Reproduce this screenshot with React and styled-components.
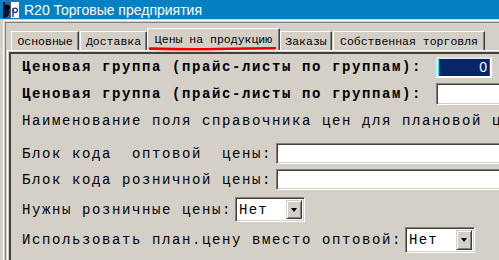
import React from 'react';
import styled, { createGlobalStyle } from 'styled-components';

const Global = createGlobalStyle`
  html, body { margin: 0; padding: 0; background: #d4d0c8; overflow: hidden; }
  #root { width: 499px; height: 260px; }
`;

const Window = styled.div`
  width: 499px;
  height: 260px;
  overflow: hidden;
  background: #d4d0c8;
  display: flex;
  flex-direction: column;
`;

const TitleBar = styled.div`
  height: 19px;
  flex-shrink: 0;
  background: #0481c3;
  display: flex;
  align-items: center;
  gap: 5px;
  padding-left: 3px;
  font-family: "Liberation Sans", Arial, sans-serif;
  font-size: 14px;
  color: #fff;
  white-space: nowrap;
`;

const Client = styled.div`
  flex: 1;
  display: flex;
  padding: 1px 0 0 3px;
  min-height: 0;
`;

const FrameOuter = styled.div`
  flex: 1;
  display: flex;
  border-top: 1px solid #fff;
  border-left: 1px solid #fff;
  padding: 1px 0 0 1px;
`;

const FrameInner = styled.div`
  flex: 1;
  display: flex;
  flex-direction: column;
  border-top: 1px solid #808080;
  border-left: 1px solid #808080;
  padding: 5px 0 0 1px;
`;

const TabStrip = styled.div`
  height: 22px;
  flex-shrink: 0;
  display: flex;
  align-items: flex-end;
  padding-left: 4px;
`;

const Tab = styled.div`
  position: relative;
  box-sizing: border-box;
  width: ${p => p.$w}px;
  height: ${p => (p.$active ? 22 : 19)}px;
  margin-left: ${p => p.$ml || 0}px;
  display: flex;
  align-items: center;
  justify-content: center;
  border-top: 1px solid #fff;
  border-left: 1px solid #fff;
  border-right: 1px solid #404040;
  box-shadow: inset -1px 0 #808080;
  font-family: "Liberation Mono", "Courier New", monospace;
  font-size: 11.5px;
  color: #000;
  white-space: nowrap;
  padding-top: ${p => (p.$active ? 0 : 1)}px;
`;

const RedMark = styled.svg`
  position: absolute;
  left: 0;
  top: 17px;
`;

const Panel = styled.div`
  flex: 1;
  display: flex;
  border-top: 1px solid #fff;
  border-left: 1px solid #fff;
  padding: 1px 0 0 1px;
`;

const PanelInner = styled.div`
  flex: 1;
  display: flex;
  flex-direction: column;
  border-top: 2px solid #404040;
  border-left: 2px solid #404040;
  padding: 2px 0 0 11px;
`;

const Row = styled.div`
  display: flex;
  align-items: center;
  height: ${p => p.$h}px;
  margin-top: ${p => p.$mt || 0}px;
  flex-shrink: 0;
`;

const Label = styled.span`
  font-family: "Liberation Mono", "Courier New", monospace;
  font-size: 14px;
  letter-spacing: 1.6px;
  font-weight: ${p => (p.$bold ? 700 : 400)};
  color: #000;
  white-space: pre;
`;

const Edit = styled.div`
  box-sizing: border-box;
  flex-shrink: 0;
  width: ${p => p.$w}px;
  height: ${p => p.$h}px;
  margin-left: ${p => p.$ml}px;
  background: #fff;
  border: 1px solid;
  border-color: #808080 #fff #fff #808080;
  box-shadow: inset 1px 1px #404040, inset -1px -1px #d4d0c8;
`;

const FocusEdit = styled.div`
  box-sizing: border-box;
  flex-shrink: 0;
  width: ${p => p.$w}px;
  height: ${p => p.$h}px;
  margin-left: ${p => p.$ml}px;
  border: 2px solid;
  border-color: #e4e4e4 #fff #fff #e4e4e4;
  background: #0a246a;
  box-shadow: inset 1px 0 #00ffff, inset -1px 0 #ff0000;
  display: flex;
  align-items: center;
  justify-content: flex-end;
  padding-right: 3px;
  font-family: "Liberation Sans", Arial, sans-serif;
  font-size: 14px;
  color: #fff;
`;

const Combo = styled.div`
  box-sizing: border-box;
  flex-shrink: 0;
  width: ${p => p.$w}px;
  height: ${p => p.$h}px;
  margin-left: ${p => p.$ml}px;
  background: #fff;
  border: 1px solid;
  border-color: #808080 #fff #fff #808080;
  box-shadow: inset 1px 1px #404040, inset -1px -1px #d4d0c8;
  display: flex;
  padding: 2px;
`;

const ComboText = styled.span`
  flex: 1;
  display: flex;
  align-items: center;
  padding-left: 1px;
  font-family: "Liberation Mono", "Courier New", monospace;
  font-size: 14px;
  letter-spacing: 1.2px;
  color: #000;
`;

const DropButton = styled.div`
  box-sizing: border-box;
  width: 16px;
  height: ${p => p.$h}px;
  background: #d4d0c8;
  border: 1px solid;
  border-color: #d4d0c8 #404040 #404040 #d4d0c8;
  box-shadow: inset 1px 1px #fff, inset -1px -1px #808080;
  display: flex;
  align-items: center;
  justify-content: center;
`;

const Arrow = styled.div`
  width: 0;
  height: 0;
  border-left: 3.5px solid transparent;
  border-right: 3.5px solid transparent;
  border-top: 4px solid #000;
`;

const Logo = () => (
  <svg width="16" height="16" viewBox="0 0 16 16">
    <rect x="0" y="0" width="16" height="16" fill="#fff" />
    <path d="M0 0 H8 V16 H0 Z" fill="#0a1430" />
    <path d="M2 3 Q5 1 7 4 Q8 6 6 8 L7 10 Q5 11 6 13 L3 16 H8 V0 H2 Z" fill="#4a5a7a" />
    <circle cx="4" cy="6" r="2.2" fill="#000" />
    <path d="M10 6 V15" stroke="#1a3a9a" strokeWidth="1.4" />
    <circle cx="12.2" cy="8.3" r="2.2" fill="none" stroke="#1a3a9a" strokeWidth="1.3" />
  </svg>
);

const Select = ({ w, h, ml, value }) => (
  <Combo $w={w} $h={h} $ml={ml}>
    <ComboText>{value}</ComboText>
    <DropButton $h={h - 6}><Arrow /></DropButton>
  </Combo>
);

export default function App() {
  return (
    <Window>
      <Global />
      <TitleBar>
        <Logo />
        <span>R20 Торговые предприятия</span>
      </TitleBar>
      <Client>
        <FrameOuter>
          <FrameInner>
            <TabStrip>
              <Tab $w={68}>Основные</Tab>
              <Tab $w={67} $ml={1}>Доставка</Tab>
              <Tab $w={133} $active>
                Цены на продукцию
                <RedMark width="130" height="5" viewBox="0 0 130 5">
                  <path d="M2 2.6 Q40 3.6 70 3 T127 2.2" stroke="#f00000" strokeWidth="2.6" fill="none" strokeLinecap="round" />
                </RedMark>
              </Tab>
              <Tab $w={52}>Заказы</Tab>
              <Tab $w={152} $ml={1}>Собственная торговля</Tab>
            </TabStrip>
            <Panel>
              <PanelInner>
                <Row $h={22}>
                  <Label $bold>Ценовая группа (прайс-листы по группам):</Label>
                  <FocusEdit $w={56} $h={21} $ml={14}>0</FocusEdit>
                </Row>
                <Row $h={22} $mt={5}>
                  <Label $bold>Ценовая группа (прайс-листы по группам):</Label>
                  <Edit $w={90} $h={22} $ml={14} />
                </Row>
                <Row $h={22} $mt={5}>
                  <Label>Наименование поля справочника цен для плановой ц</Label>
                </Row>
                <Row $h={21} $mt={11}>
                  <Label>Блок кода  оптовой  цены:</Label>
                  <Edit $w={260} $h={21} $ml={4} />
                </Row>
                <Row $h={21} $mt={5}>
                  <Label>Блок кода розничной цены:</Label>
                  <Edit $w={260} $h={21} $ml={4} />
                </Row>
                <Row $h={25} $mt={7}>
                  <Label>Нужны розничные цены:</Label>
                  <Select w={70} h={25} ml={3} value="Нет" />
                </Row>
                <Row $h={26} $mt={5}>
                  <Label>Использовать план.цену вместо оптовой:</Label>
                  <Select w={70} h={26} ml={3} value="Нет" />
                </Row>
              </PanelInner>
            </Panel>
          </FrameInner>
        </FrameOuter>
      </Client>
    </Window>
  );
}
